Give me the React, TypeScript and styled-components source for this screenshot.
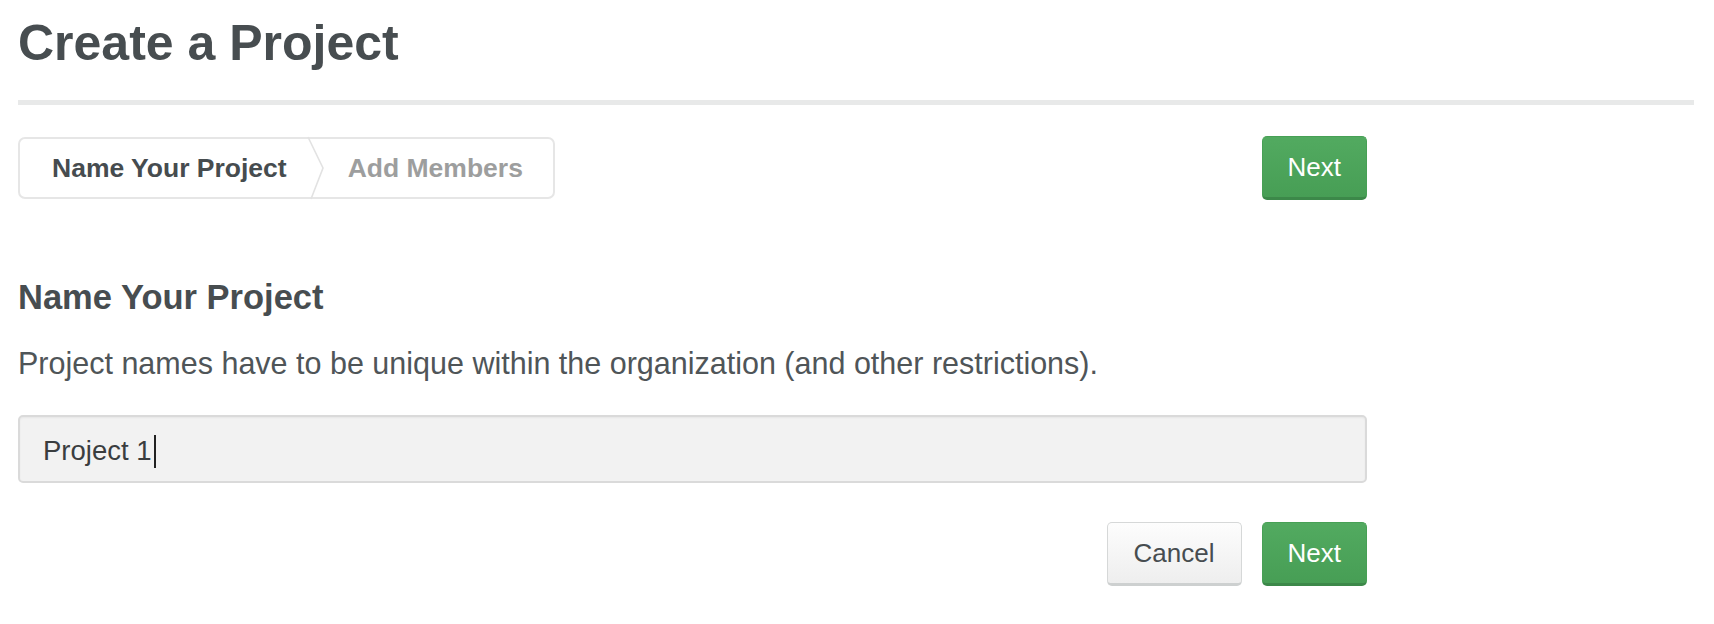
import React from "react"
import styled, { createGlobalStyle } from "styled-components"

const GlobalStyle = createGlobalStyle`
  body {
    margin: 0;
    background: #ffffff;
    font-family: "Liberation Sans", Arial, Helvetica, sans-serif;
  }
`

const Page = styled.div`
  padding: 18px 20px 40px 18px;
`

const Title = styled.h1`
  margin: 0;
  font-size: 50px;
  line-height: 50px;
  font-weight: 700;
  color: #474d50;
`

const Divider = styled.hr`
  margin: 32px 0 0;
  height: 5px;
  border: 0;
  background: #e8e9e9;
`

const Form = styled.div`
  width: 1349px;
`

const StepsRow = styled.div`
  margin-top: 31px;
  display: flex;
  align-items: center;
  justify-content: space-between;
`

const Steps = styled.ol`
  list-style: none;
  margin: 0;
  padding: 0 30px 0 32px;
  height: 58px;
  display: flex;
  align-items: center;
  border: 2px solid #e6e6e6;
  border-radius: 7px;
`

const Step = styled.li<{ $active?: boolean }>`
  font-size: 26.5px;
  font-weight: 700;
  color: ${props => (props.$active ? "#464c4f" : "#9d9e9e")};
`

const Chevron = styled.svg`
  display: block;
  align-self: stretch;
  width: 16px;
  margin: 0 24px 0 21px;
  overflow: visible;
`

const Heading = styled.h2`
  margin: 80px 0 0;
  font-size: 34.5px;
  line-height: 34px;
  font-weight: 700;
  color: #474d50;
`

const Description = styled.p`
  margin: 34px 0 0;
  font-size: 30.5px;
  line-height: 30px;
  color: #4f5558;
`

const Field = styled.div`
  margin-top: 37px;
  box-sizing: border-box;
  height: 68px;
  display: flex;
  align-items: center;
  padding: 4px 23px 0;
  background: #f2f2f2;
  border: 2px solid #dadada;
  border-radius: 5px;
  box-shadow: inset 0 1px 2px rgba(0, 0, 0, 0.05);
  font-size: 27.5px;
  color: #3a3d3f;
`

const Caret = styled.span`
  display: inline-block;
  width: 2px;
  height: 33px;
  margin-left: 2px;
  background: #222222;
`

const Actions = styled.div`
  margin-top: 39px;
  display: flex;
  justify-content: flex-end;
  gap: 20px;
`

const Button = styled.button<{ $primary?: boolean }>`
  box-sizing: border-box;
  height: 64px;
  padding: 0 ${props => (props.$primary ? "25px" : "26px")};
  font-family: inherit;
  font-size: 26px;
  border-radius: 5px;
  cursor: pointer;
  color: ${props => (props.$primary ? "#ffffff" : "#474d50")};
  background: ${props =>
    props.$primary
      ? "linear-gradient(#52aa60, #479e55)"
      : "linear-gradient(#fdfdfd, #eeeeee)"};
  border: 1px solid ${props => (props.$primary ? "#47a055" : "#d6d8d8")};
  border-bottom: 3px solid ${props => (props.$primary ? "#3c8849" : "#cdd0d0")};
`

const App: React.FC = () => {
  return (
    <Page>
      <GlobalStyle />
      <Title>Create a Project</Title>
      <Divider />
      <Form>
        <StepsRow>
          <Steps>
            <Step $active>Name Your Project</Step>
            <Chevron viewBox="0 0 16 58" preserveAspectRatio="none">
              <polyline
                points="0,-2 15,29 3,60"
                fill="none"
                stroke="#e2e2e2"
                strokeWidth="1.6"
              />
            </Chevron>
            <Step>Add Members</Step>
          </Steps>
          <Button $primary>Next</Button>
        </StepsRow>

        <Heading>Name Your Project</Heading>
        <Description>
          Project names have to be unique within the organization (and other
          restrictions).
        </Description>

        <Field role="textbox" aria-label="Project name">
          Project 1
          <Caret />
        </Field>

        <Actions>
          <Button>Cancel</Button>
          <Button $primary>Next</Button>
        </Actions>
      </Form>
    </Page>
  )
}

export default App
